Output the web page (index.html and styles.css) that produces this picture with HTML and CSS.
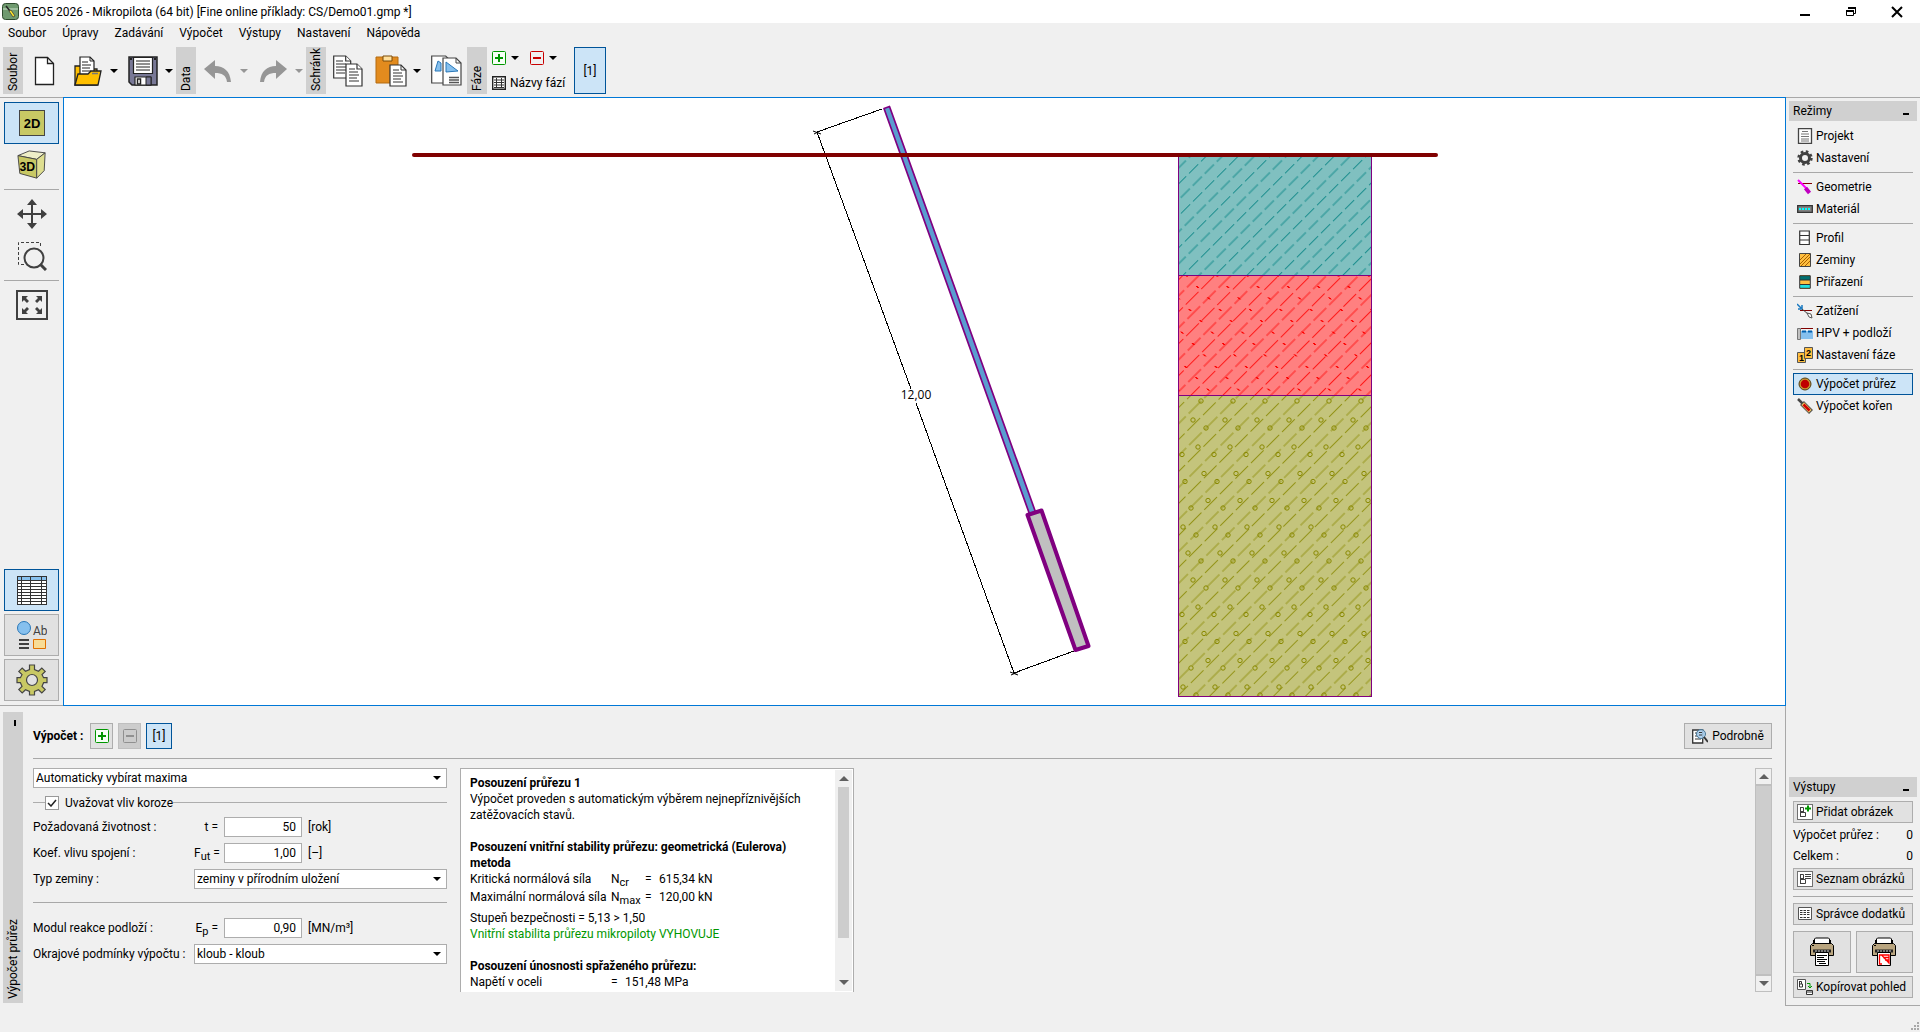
FILE: index.html
```html
<!DOCTYPE html>
<html lang="cs">
<head>
  <meta charset="UTF-8">
  <title>GEO5 2026 - Mikropilota</title>
  <link rel="stylesheet" href="styles.css">
</head>
<body>
  <!-- shared icons -->
  <svg class="sprite" aria-hidden="true">
    <symbol id="i-plus" viewBox="0 0 14 14"><rect x=".5" y=".5" width="13" height="13" rx="1" fill="#f6fff6" stroke="#009600"/><path d="M7 3v8M3 7h8" stroke="#009600" stroke-width="2"/></symbol>
    <symbol id="i-minus" viewBox="0 0 14 14"><rect x=".5" y=".5" width="13" height="13" rx="1" fill="none" stroke="currentColor"/><path d="M3 7h8" stroke="currentColor" stroke-width="2"/></symbol>
    <symbol id="i-down" viewBox="0 0 8 4"><path d="M0 0h8L4 4z" fill="currentColor"/></symbol>
    <symbol id="i-up" viewBox="0 0 10 5"><path d="M0 5h10L5 0z" fill="#606060"/></symbol>
    <symbol id="i-printer" viewBox="0 0 24 30">
      <path d="M4.500 8V2l1-1h13l1 1v6" fill="#fff" stroke="#000"/>
      <path d="M.500 8.500l2-2h19l2 2v10H.500z" fill="#b9a57f" stroke="#000"/>
      <path d="M3 3h1.500v4H3zM19.500 3H21v4h-1.500z" fill="#000"/>
      <path d="M3 12.500h18v3H3z" fill="#222"/><path d="M5 14h14" stroke="#ccc" stroke-dasharray="2 1"/>
      <path d="M2 8.500h2" stroke="#000"/>
      <path d="M5.500 15.500h13v13h-13z" fill="#fff" stroke="#000"/>
    </symbol>
    <symbol id="i-picture" viewBox="0 0 16 16"><rect x=".5" y=".5" width="15" height="15" fill="#fff" stroke="#707070"/><path d="M3.500 3v10M3.500 3.500h3v4h-3M3.500 8.500h5v4h-5M6.500 6.500v2" fill="none" stroke="#404040"/></symbol>
  </svg>

  <header class="titlebar">
    <svg width="17" height="17" viewBox="0 0 17 17"><rect x=".5" y=".5" width="16" height="16" rx="3" fill="#6f9a6f" stroke="#2d4a2d"/><path d="M1 6h15" stroke="#cfe3cf"/><path d="M4 3l4 5" stroke="#222" stroke-width="1.500"/><path d="M7 8l4 6 2-1-4-6z" fill="#ffe92e" stroke="#333" stroke-width=".7"/></svg>
    <span class="title">GEO5 2026 - Mikropilota (64 bit) [Fine online příklady: CS/Demo01.gmp *]</span>
    <button class="win-btn" aria-label="Minimalizovat"><svg width="12" height="12"><path d="M1 9h10" stroke="#000" stroke-width="2"/></svg></button>
    <button class="win-btn" aria-label="Obnovit"><svg width="12" height="12"><path d="M3.500 3V1.500h7v6H9" fill="none" stroke="#000"/><path d="M3 1h8v2H3zM1 4h8v2H1z"/><path d="M1.500 4.500h7v5h-7z" fill="none" stroke="#000"/></svg></button>
    <button class="win-btn" aria-label="Zavřít"><svg width="12" height="12"><path d="M1 1l10 10M11 1L1 11" stroke="#000" stroke-width="2"/></svg></button>
  </header>

  <nav class="menu">
    <a href="#">Soubor</a>
    <a href="#">Úpravy</a>
    <a href="#">Zadávání</a>
    <a href="#">Výpočet</a>
    <a href="#">Výstupy</a>
    <a href="#">Nastavení</a>
    <a href="#">Nápověda</a>
  </nav>

  <div class="toolbar">
    <div class="group">
      <span class="tab">Soubor</span>
      <button class="tool" aria-label="Nový"><svg width="30" height="30" viewBox="0 0 30 30"><path d="M5.500 1.500h12l6 6v21h-18z" fill="#fff" stroke="#222" stroke-width="1.300"/><path d="M17.500 1.500v6h6" fill="none" stroke="#222" stroke-width="1.300"/></svg></button>
      <div class="split">
        <button class="tool" aria-label="Otevřít"><svg width="30" height="30" viewBox="0 0 30 30"><path d="M2 29V10h5l2 3h15v16z" fill="#ffbf00" stroke="#222" stroke-width="1.300"/><path d="M7 20V1h10l4 4v15z" fill="#fff" stroke="#222" stroke-width="1.200"/><path d="M17 1v4h4M9 6h6M9 9h9M9 12h8M9 15h9" fill="none" stroke="#222"/><path d="M2 29l3-11h10l3-3h10l-3 14z" fill="#ffbf00" stroke="#222" stroke-width="1.300"/><path d="M19 17.500h6" stroke="#777" stroke-width="1.500"/></svg></button>
        <button class="arrow" aria-label="Otevřít další"><svg width="8" height="4"><use href="#i-down"/></svg></button>
      </div>
      <div class="split">
        <button class="tool" aria-label="Uložit"><svg width="30" height="30" viewBox="0 0 30 30"><path d="M1 1h28v28H4l-3-3z" fill="#787896" stroke="#222" stroke-width="1.500"/><path d="M5.500 1.500h19v16h-19z" fill="#fff" stroke="#222" stroke-width="1.200"/><path d="M8 5h14M8 8h14M8 11h14M8 14h14" stroke="#222"/><path d="M7 21h16v8H7z" fill="#fff" stroke="#222" stroke-width="1.200"/><path d="M18 21h5v8h-5z" fill="#787896" stroke="#222"/><path d="M9.500 23h3v5h-3z" fill="#fff" stroke="#222" stroke-width="1.500"/><path d="M2 3h2M26 3h2" stroke="#222" stroke-width="2"/></svg></button>
        <button class="arrow" aria-label="Uložit další"><svg width="8" height="4"><use href="#i-down"/></svg></button>
      </div>
    </div>

    <div class="group">
      <span class="tab">Data</span>
      <div class="split off">
        <button class="tool" aria-label="Zpět"><svg width="28" height="24" viewBox="0 0 28 24"><path d="M0 10L11 1v6c9 0 15 5 16 16h-4c-1-7-5-9-12-9v6z" fill="#969696"/></svg></button>
        <button class="arrow" aria-label="Historie zpět"><svg width="8" height="4"><use href="#i-down"/></svg></button>
      </div>
      <div class="split off">
        <button class="tool" aria-label="Znovu"><svg width="28" height="24" viewBox="0 0 28 24"><path d="M28 10L17 1v6C8 7 2 12 1 23h4c1-7 5-9 12-9v6z" fill="#969696"/></svg></button>
        <button class="arrow" aria-label="Historie znovu"><svg width="8" height="4"><use href="#i-down"/></svg></button>
      </div>
    </div>

    <div class="group">
      <span class="tab">Schránk</span>
      <button class="tool" aria-label="Kopírovat"><svg width="30" height="32" viewBox="0 0 30 32"><g fill="#fff" stroke="#333" stroke-width="1.200"><path d="M.7 1h12l5 5v17H.7z"/><path d="M12.700 1v5h5M3 6h7M3 9h10M3 12h10M3 15h10M3 18h9"/><path d="M13 9h11l5 5v17H13z"/><path d="M24 9v5h5M16 14h6M16 17h9M16 20h10M16 23h8M16 26h10"/></g></svg></button>
      <div class="split">
        <button class="tool" aria-label="Vložit"><svg width="32" height="32" viewBox="0 0 32 32"><path d="M1 2h22v26H1z" fill="#e28b1e" stroke="#b36a10"/><path d="M8 1h9v5H8z" fill="#ffdf9b" stroke="#7a4a08"/><path d="M15 10h11l5 5v16H15z" fill="#fff" stroke="#333" stroke-width="1.200"/><path d="M26 10v5h5M18 15h6M18 18h9M18 21h10M18 24h8M18 27h10" fill="none" stroke="#333"/></svg></button>
        <button class="arrow" aria-label="Vložit další"><svg width="8" height="4"><use href="#i-down"/></svg></button>
      </div>
      <button class="tool" aria-label="Kopírovat pohled"><svg width="31" height="31" viewBox="0 0 31 31"><path d="M.7 1h14l5 5v22H.7z" fill="#fff" stroke="#444" stroke-width="1.200"/><path d="M4 16l3-10 3 2v8z" fill="#86c0ee" stroke="#2a78b8"/><path d="M12 3h13l5 5v22H12z" fill="#fff" stroke="#444" stroke-width="1.200"/><path d="M25 3v5h5" fill="none" stroke="#444"/><path d="M15 17V7l12 9z" fill="#86c0ee" stroke="#2a78b8"/><path d="M18 22.500h10M18 25h10M18 27.500h10" stroke="#555" stroke-width="1.300"/></svg></button>
    </div>

    <div class="group">
      <span class="tab">Fáze</span>
      <div class="phases">
        <div class="phase-row">
          <button class="flat" aria-label="Přidat fázi"><svg width="14" height="14"><use href="#i-plus"/></svg></button>
          <button class="arrow" aria-label="Přidat fázi další"><svg width="8" height="4"><use href="#i-down"/></svg></button>
          <button class="flat red" aria-label="Odebrat fázi"><svg width="14" height="14"><use href="#i-minus"/></svg></button>
          <button class="arrow" aria-label="Odebrat fázi další"><svg width="8" height="4"><use href="#i-down"/></svg></button>
        </div>
        <button class="flat names"><svg width="14" height="14" viewBox="0 0 14 14"><path d="M.7.7h12.600v12.600H.7z" fill="#fff" stroke="#222" stroke-width="1.400"/><path d="M2 4h10M2 6.500h10M2 9h10M2 11.500h10M4.500 2v10M9.500 2v10" stroke="#333"/></svg>Názvy fází</button>
      </div>
      <button class="active phase-btn">[1]</button>
    </div>
  </div>

  <main class="workspace">
    <div class="viewbar">
      <button class="view active" aria-label="2D"><svg width="26" height="26" viewBox="0 0 26 26"><rect x=".5" y=".5" width="25" height="25" fill="#c8c864" stroke="#444"/><text class="icon-text" x="13" y="18" text-anchor="middle">2D</text></svg></button>
      <button class="view" aria-label="3D"><svg width="30" height="30" viewBox="0 0 32 32"><path d="M1 6L13 1l17 2-9 7z" fill="#eeeec8" stroke="#444"/><path d="M1 6l20 4v20L3 25z" fill="#c8c864" stroke="#444"/><path d="M21 10l9-7-1 19-8 8z" fill="#dede90" stroke="#444"/><text class="icon-text" x="11" y="22" text-anchor="middle">3D</text></svg></button>
      <hr>
      <button class="view" aria-label="Posun"><svg width="30" height="30" viewBox="0 0 30 30"><path d="M15 4v22M4 15h22" stroke="#404040" stroke-width="2"/><path d="M15 0l5 6H10zM15 30l5-6H10zM0 15l6-5v10zM30 15l-6-5v10z" fill="#404040"/></svg></button>
      <button class="view" aria-label="Zvětšit výřez"><svg width="30" height="30" viewBox="0 0 30 30"><path d="M7 23.500H1.500v-22h22V7" fill="none" stroke="#404040" stroke-dasharray="3 2"/><circle cx="17" cy="17" r="9.500" fill="none" stroke="#404040" stroke-width="2"/><path d="M23 23l6 6" stroke="#404040" stroke-width="3"/></svg></button>
      <hr>
      <button class="view" aria-label="Zobrazit vše"><svg width="32" height="30" viewBox="0 0 32 30"><rect x="1" y="1" width="30" height="28" fill="none" stroke="#404040" stroke-width="2"/><path d="M6 6h6l-2 2 3 3-2 2-3-3-2 2zM26 6h-6l2 2-3 3 2 2 3-3 2 2zM6 24h6l-2-2 3-3-2-2-3 3-2-2zM26 24h-6l2-2-3-3 2-2 3 3 2-2z" fill="#404040"/></svg></button>
      <div class="view-bottom">
        <button class="view active" aria-label="Tabulka"><svg width="30" height="29" viewBox="0 0 30 29"><rect x=".5" y=".5" width="29" height="28" fill="#fff" stroke="#333"/><path d="M1 1h28v3H1z" fill="#86c0ee"/><path d="M1 4.500h28M1 7.500h28M1 10.500h28M1 13.500h28M1 16.500h28M1 19.500h28M1 22.500h28M1 25.500h28M4.500 1v27M13.500 1v27M24.500 1v27" stroke="#333"/></svg></button>
        <button class="view raised" aria-label="Nastavení kreslení"><svg width="30" height="28" viewBox="0 0 30 28"><circle cx="7" cy="7" r="6.500" fill="#86c0ee" stroke="#2a78b8"/><text class="ab-text" x="16" y="14">Ab</text><path d="M2 19h10M2 23h10M2 27h10" stroke="#404040" stroke-width="2"/><path d="M16.500 18.500h12v9h-12z" fill="#f8dc96" stroke="#e07000"/></svg></button>
        <button class="view raised" aria-label="Nastavení"><svg width="32" height="32" viewBox="-16 -16 32 32"><g fill="#c8c864" stroke="#444" stroke-width="1.200"><path d="M-2.500-10.500V-15h5v4.500l4 1.700 3.300-3.200 3.400 3.400-3.200 3.300 1.600 3H15v5h-3.400l-1.600 3.600 3.200 3.300-3.400 3.400-3.300-3.200-4 1.600V15h-5v-3.600l-4-1.600-3.300 3.200-3.400-3.400 3.200-3.300-1.600-3.600H-15v-5h3.400l1.600-3-3.200-3.300 3.400-3.400 3.300 3.200z"/><circle r="5.500" fill="#e1e1e1"/></g></svg></button>
      </div>
    </div>

    <section class="canvas">
      <svg class="drawing" viewBox="64 98 1721 607" preserveAspectRatio="xMidYMid meet">
        <defs>
          <pattern id="hatch-teal" width="17" height="22.600" patternUnits="userSpaceOnUse" patternTransform="translate(0 2.700) rotate(-45)"><path d="M0 1h13M6 12.300h11M0 12.300h2" stroke="#008080" stroke-width=".8"/></pattern>
          <pattern id="hatch-red" width="22" height="22.600" patternUnits="userSpaceOnUse" patternTransform="translate(0 2.700) rotate(-45)"><path d="M0 1h18M9 12.300h13M0 12.300h5" stroke="#f00" stroke-width=".8"/></pattern>
          <pattern id="hatch-olive" width="22" height="22.600" patternUnits="userSpaceOnUse" patternTransform="translate(0 2.700) rotate(-45)"><path d="M0 1h18M9 12.300h13M0 12.300h5" stroke="#888800" stroke-width=".8"/></pattern>
          <pattern id="dots-red" width="30.300" height="11.400" patternUnits="userSpaceOnUse" patternTransform="translate(1195.500 286) skewX(44.700)"><path d="M0 0h2v2H0z" fill="#f00"/></pattern>
          <pattern id="rings-olive" x="1179" y="396" width="32" height="160" patternUnits="userSpaceOnUse">
            <g fill="none" stroke="#888800">
              <circle cx="22" cy="5" r="2.200"/><circle cx="14" cy="24" r="2.200"/>
              <circle cx="27" cy="32" r="2.200"/><circle cx="19" cy="51" r="2.200"/>
              <circle cx="3" cy="58.500" r="2.200"/><circle cx="25" cy="77.500" r="2.200"/>
              <circle cx="6" cy="85.500" r="2.200"/><circle cx="29" cy="104.500" r="2.200"/>
              <circle cx="12" cy="112" r="2.200"/><circle cx="4" cy="131" r="2.200"/>
              <circle cx="17" cy="139" r="2.200"/><circle cx="9" cy="157" r="2.200"/>
            </g>
          </pattern>
        </defs>

        <!-- soil profile -->
        <g>
          <rect x="1178" y="155" width="193" height="120" fill="#80c0c0"/>
          <rect x="1178" y="155" width="193" height="120" fill="url(#hatch-teal)"/>
          <rect x="1178" y="275" width="193" height="120" fill="#ff8080"/>
          <rect x="1178" y="275" width="193" height="120" fill="url(#hatch-red)"/>
          <rect x="1178" y="275" width="193" height="120" fill="url(#dots-red)"/>
          <rect x="1178" y="395" width="193" height="301" fill="#c4c47c"/>
          <rect x="1178" y="395" width="193" height="301" fill="url(#hatch-olive)"/>
          <rect x="1178" y="395" width="193" height="301" fill="url(#rings-olive)"/>
          <path d="M1178.500 155v541.500h193V155M1178.500 275.500h193M1178.500 395.500h193" fill="none" stroke="#800080" shape-rendering="crispEdges"/>
        </g>

        <!-- dimension -->
        <path d="M882 109L817 132L911 389M916 403L1014 673L1074 651" fill="none" stroke="#000" shape-rendering="crispEdges"/>
        <path d="M813 131l8 3M814 134l6-3M1010 672l8 3M1011 675l7-3" stroke="#000"/>
        <text class="dim-text" x="916" y="399" text-anchor="middle">12,00</text>

        <!-- micropile: tube and root -->
        <g stroke-linejoin="round">
          <path d="M884 108.500l5.500-2L1035.500 512l-6 2z" fill="#5b9dd0" stroke="#800080" stroke-width="1.700"/>
          <path d="M1027.500 515l14-4.500L1088.500 646l-13 4z" fill="#c0c0c0" stroke="#800080" stroke-width="4"/>
        </g>
        <path d="M414 155h1022" stroke="#800000" stroke-width="4" stroke-linecap="round"/>
      </svg>
    </section>

    <section class="panel">
      <div class="panel-tab"><span>Výpočet průřez</span><i></i></div>
      <div class="panel-body">
        <div class="panel-head">
          <strong>Výpočet :</strong>
          <button class="small raised" aria-label="Přidat výpočet"><svg width="14" height="14"><use href="#i-plus"/></svg></button>
          <button class="small raised" aria-label="Odebrat výpočet" disabled><svg width="14" height="14"><use href="#i-minus"/></svg></button>
          <button class="small active calc-btn">[1]</button>
          <button class="raised details"><svg width="16" height="16" viewBox="0 0 16 16"><path d="M.7 2h10v13H.7z" fill="#fff" stroke="#333" stroke-width="1.300"/><path d="M3 5h4M3 8h4M3 11h6" stroke="#333"/><circle cx="9" cy="6" r="4.500" fill="#a8cff0" fill-opacity=".85" stroke="#4a7896"/><path d="M7 4.500h3M7 7h3" stroke="#333"/><path d="M12 9l4 5" stroke="#333" stroke-width="2"/></svg>Podrobně</button>
        </div>

        <div class="panel-content">
          <form class="form">
            <select aria-label="Výběr zatížení"><option>Automaticky vybírat maxima</option></select>
            <label class="corrosion"><input type="checkbox" checked>Uvažovat vliv koroze</label>
            <div class="field">
              <label for="life">Požadovaná životnost :</label>
              <span class="sym">t =</span><input id="life" type="text" value="50"><span>[rok]</span>
            </div>
            <div class="field">
              <label for="fut">Koef. vlivu spojení :</label>
              <span class="sym">F<sub>ut</sub> =</span><input id="fut" type="text" value="1,00"><span>[–]</span>
            </div>
            <div class="field">
              <label for="soil">Typ zeminy :</label>
              <select id="soil"><option>zeminy v přírodním uložení</option></select>
            </div>
            <hr>
            <div class="field">
              <label for="ep">Modul reakce podloží :</label>
              <span class="sym">E<sub>p</sub> =</span><input id="ep" type="text" value="0,90"><span>[MN/m³]</span>
            </div>
            <div class="field">
              <label for="bc">Okrajové podmínky výpočtu :</label>
              <select id="bc"><option>kloub - kloub</option></select>
            </div>
          </form>

          <div class="report">
            <div class="report-text">
              <h3>Posouzení průřezu 1</h3>
              <p>Výpočet proveden s automatickým výběrem nejnepříznivějších zatěžovacích stavů.</p>
              <h3>Posouzení vnitřní stability průřezu: geometrická (Eulerova) metoda</h3>
              <table>
                <tr><td class="name">Kritická normálová síla</td><td class="var">N<sub>cr</sub></td><td class="eq">=</td><td class="val">615,34</td><td>kN</td></tr>
                <tr><td class="name">Maximální normálová síla</td><td class="var">N<sub>max</sub></td><td class="eq">=</td><td class="val">120,00</td><td>kN</td></tr>
              </table>
              <p>Stupeň bezpečnosti = 5,13 &gt; 1,50</p>
              <p class="ok">Vnitřní stabilita průřezu mikropiloty VYHOVUJE</p>
              <h3>Posouzení únosnosti spřaženého průřezu:</h3>
              <table>
                <tr><td class="name">Napětí v oceli</td><td class="eq">=</td><td class="val">151,48</td><td>MPa</td></tr>
              </table>
            </div>
            <div class="scroll inner">
              <button aria-label="Nahoru"><svg width="10" height="5"><use href="#i-up"/></svg></button>
              <div class="thumb"></div>
              <button class="down" aria-label="Dolů"><svg width="10" height="5"><use href="#i-up"/></svg></button>
            </div>
          </div>

          <div class="scroll outer">
            <button aria-label="Nahoru"><svg width="10" height="5"><use href="#i-up"/></svg></button>
            <div class="thumb"></div>
            <button class="down" aria-label="Dolů"><svg width="10" height="5"><use href="#i-up"/></svg></button>
          </div>
        </div>
      </div>
    </section>

    <aside class="side">
      <div class="side-head">Režimy<i></i></div>
      <nav class="modes">
        <a href="#"><svg width="16" height="16" viewBox="0 0 16 16"><path d="M1.500.7h13v14.600h-13z" fill="#fff" stroke="#444" stroke-width="1.300"/><path d="M5 3.500h6M4 6h8M4 8.500h8M4 11h8M4 13h8" stroke="#777"/></svg>Projekt</a>
        <a href="#"><svg width="16" height="16" viewBox="-8 -8 16 16"><circle r="4.500" fill="none" stroke="#404040" stroke-width="3"/><circle r="6.500" fill="none" stroke="#404040" stroke-width="2.400" stroke-dasharray="2.600 2.505"/></svg>Nastavení</a>
        <hr>
        <a href="#"><svg width="16" height="16" viewBox="0 0 16 16"><path d="M1 4.500h14" stroke="#800000"/><path d="M1 1l9 9" stroke="#f0f" stroke-width="2"/><path d="M8.500 9l4 5" stroke="#c000c0" stroke-width="4"/></svg>Geometrie</a>
        <a href="#"><svg width="16" height="16" viewBox="0 0 16 16"><path d="M.7 4.700h14.600v6.600H.7z" fill="#808080" stroke="#333" stroke-width="1.300"/><path d="M2 8h12" stroke="#0ff" stroke-width="2" stroke-dasharray="2 1"/></svg>Materiál</a>
        <hr>
        <a href="#"><svg width="16" height="16" viewBox="0 0 16 16"><path d="M2.700 1h9.600v13.500H2.700zM2.700 5.500h9.600M2.700 10h9.600" fill="#fff" stroke="#333" stroke-width="1.200"/></svg>Profil</a>
        <a href="#"><svg width="16" height="16" viewBox="0 0 16 16"><path d="M2.500 1.500h11v13h-11z" fill="#ffbf40" stroke="#444"/><path d="M3 8l6-6M3 12l10-10M4 14l9-9M8 14l5-5" stroke="#a86000"/></svg>Zeminy</a>
        <a href="#"><svg width="16" height="16" viewBox="0 0 16 16"><path d="M3 1h10v14H3z" fill="#ffbf40"/><path d="M3 2h10v4H3z" fill="#007070"/><path d="M3 11h10v3H3z" fill="#20e0e0"/><path d="M2.700 1.700h10.600v12.600H2.700zM3 6h10M3 10.500h10" fill="none" stroke="#333"/></svg>Přiřazení</a>
        <hr>
        <a href="#"><svg width="16" height="16" viewBox="0 0 16 16"><path d="M3 7.500h12" stroke="#800000"/><path d="M0 1l4 4M5 2v4H1" fill="none" stroke="#1878c0" stroke-width="1.500"/><path d="M5 6l6 5" stroke="#444"/><path d="M10 10l2 4 3 1-1-4z" fill="#fff" stroke="#555"/></svg>Zatížení</a>
        <a href="#"><svg width="16" height="16" viewBox="0 0 16 16"><path d="M4 6h12v8H4z" fill="#86c0ee"/><path d="M4 3.500h12" stroke="#800000"/><path d="M5 6.500h11" stroke="#0060b0" stroke-width="2" stroke-dasharray="4 2"/><path d="M.5 3.500h3v11h-3z" fill="#c0c0c0" stroke="#777"/></svg>HPV + podloží</a>
        <a href="#"><svg width="16" height="16" viewBox="0 0 16 16"><path d="M.5 5.500h8v10h-8z" fill="#ffbf40" stroke="#555"/><path d="M7.500.5h8v11h-8z" fill="#ffbf40" stroke="#555"/><text class="tiny-text" x="2" y="14">1</text><text class="tiny-text" x="9" y="9">2</text></svg>Nastavení fáze</a>
        <hr>
        <a href="#" class="current"><svg width="16" height="16" viewBox="0 0 16 16"><circle cx="8" cy="8" r="5.500" fill="#c00000"/><circle cx="8" cy="8" r="5" fill="none" stroke="#c89a30" stroke-width="1.500"/><circle cx="8" cy="8" r="6" fill="none" stroke="#554010"/></svg>Výpočet průřez</a>
        <a href="#"><svg width="16" height="16" viewBox="0 0 16 16"><path d="M1 1l6 6" stroke="#444" stroke-width="2.500"/><path d="M5 5l9 9" stroke="#444" stroke-width="5.500"/><path d="M5.700 5.700l7.600 7.600" stroke="#e8c060" stroke-width="4"/><path d="M6.500 6.500l6 6" stroke="#d00000" stroke-width="2.500"/></svg>Výpočet kořen</a>
      </nav>

      <div class="outputs">
        <div class="side-head">Výstupy<i></i></div>
        <div class="outputs-body">
          <button class="raised wide"><svg width="16" height="16" viewBox="0 0 16 16"><use href="#i-picture"/><path d="M11 1.500v6M8 4.500h6" stroke="#009600" stroke-width="2"/></svg>Přidat obrázek</button>
          <div class="count"><span>Výpočet průřez :</span><span>0</span></div>
          <div class="count"><span>Celkem :</span><span>0</span></div>
          <button class="raised wide"><svg width="16" height="16" viewBox="0 0 16 16"><use href="#i-picture"/><path d="M8 3.500h6M8 5.500h6M8 7.500h6" stroke="#404040"/></svg>Seznam obrázků</button>
          <hr>
          <button class="raised wide"><svg width="16" height="16" viewBox="0 0 16 16"><path d="M1.500 1.500h13v12h-13z" fill="#fff" stroke="#555"/><path d="M3 4.500h10M3 6.500h10M3 8.500h10M3 11.500h10" stroke="#333" stroke-dasharray="2.500 1"/></svg>Správce dodatků</button>
          <div class="printers">
            <button class="raised" aria-label="Tisk protokolu"><svg width="24" height="30" viewBox="0 0 24 30"><use href="#i-printer"/><path d="M7 18.500h10M7 20.500h7M7 22.500h10M7 24.500h8M9 26.500h7" stroke="#000"/></svg></button>
            <button class="raised" aria-label="Tisk pohledu"><svg width="24" height="30" viewBox="0 0 24 30"><use href="#i-printer"/><path d="M9 18H7.500v9H10M9.500 18h7.500v8zM11 20.500h6M13 23h4" fill="none" stroke="#f00" stroke-width="1.300"/></svg></button>
          </div>
          <button class="raised wide"><svg width="16" height="16" viewBox="0 0 16 16"><path d="M.5.500h8v10h-8z" fill="#fff" stroke="#555"/><path d="M2.500 2v6h3V5h-3M2.500 2.500h2V5" fill="none" stroke="#333"/><path d="M10 4.500h3v4M11 7l2 2 2-2" fill="none" stroke="#009600"/><path d="M9.500 11.500h6v4h-6zM9.500 13h6" fill="#fff" stroke="#333"/></svg>Kopírovat pohled</button>
        </div>
      </div>
    </aside>
  </main>

  <footer class="status"><svg width="9" height="9" viewBox="0 0 9 9"><path d="M7 0h2v2H7zM4 3h2v2H4zM7 3h2v2H7zM1 6h2v2H1zM4 6h2v2H4zM7 6h2v2H7z" fill="#a8a8a8"/></svg></footer>
</body>
</html>
```
FILE: styles.css
```css
* {
  box-sizing: border-box;
  margin: 0;
  padding: 0;
}

body {
  display: flex;
  flex-direction: column;
  height: 100vh;
  overflow: hidden;
  background: #f0f0f0;
  color: #000;
  font-family: Roboto, "Open Sans", sans-serif;
  font-size: 12px;
  line-height: 16px;
}

button, input, select {
  font: inherit;
  color: inherit;
  border-radius: 0;
}

button {
  display: flex;
  align-items: center;
  justify-content: center;
  background: none;
  border: none;
}

a {
  color: inherit;
  text-decoration: none;
}

svg {
  display: block;
  flex: none;
}

hr {
  border: none;
  border-top: 1px solid #a8a8a8;
}

sub {
  font-size: 11px;
  line-height: 0;
  vertical-align: -3px;
}

.sprite {
  display: none;
}

.raised {
  background: #e1e1e1;
  border: 1px solid #adadad;
}

.active {
  background: #cce4f7;
  border: 1px solid #005499;
}

/* title and menu */
.titlebar {
  display: flex;
  align-items: center;
  height: 23px;
  padding: 0 0 0 2px;
  background: #fff;
}

.title {
  flex: 1;
  margin-left: 4px;
}

.win-btn {
  width: 46px;
  height: 23px;
}

.menu {
  display: flex;
  gap: 16px;
  height: 20px;
  padding: 2px 8px;
}

/* toolbar */
.toolbar {
  display: flex;
  gap: 1px;
  height: 54px;
  padding: 4px 3px 3px;
}

.group {
  display: flex;
  gap: 3px;
}

.tab {
  width: 20px;
  margin-right: -1px;
  padding-top: 3px;
  background: #d0d0d0;
  line-height: 20px;
  white-space: nowrap;
  writing-mode: vertical-rl;
  transform: rotate(180deg);
}

.tool {
  width: 40px;
}

.split {
  display: flex;
}

.split.off {
  color: #969696;
}

.arrow {
  width: 12px;
}

.phases {
  display: flex;
  flex-direction: column;
  justify-content: space-between;
  width: 82px;
  padding: 4px 0 3px 3px;
}

.phase-row {
  display: flex;
  gap: 3px;
}

.phase-row .arrow {
  margin-right: 6px;
}

.red {
  color: #c80000;
}

.names {
  justify-content: flex-start;
  gap: 4px;
  white-space: nowrap;
}

.phase-btn {
  width: 32px;
}

/* main area */
.workspace {
  flex: 1;
  display: grid;
  grid-template-columns: 63px 1fr 134px;
  grid-template-rows: 1fr 300px;
  min-height: 0;
}

.viewbar {
  display: flex;
  flex-direction: column;
  padding: 4px;
  border-top: 1px solid #a8a8a8;
  border-bottom: 1px solid #a8a8a8;
}

.viewbar hr {
  margin: 3px 0;
}

.view {
  width: 55px;
  height: 42px;
}

.view-bottom {
  display: flex;
  flex-direction: column;
  gap: 3px;
  margin-top: auto;
}

.icon-text {
  font: bold 13px "Liberation Sans", sans-serif;
}

.ab-text {
  font-size: 12px;
  fill: #404040;
}

.tiny-text {
  font: bold 9px "Liberation Sans", sans-serif;
}

.canvas {
  min-width: 0;
  min-height: 0;
  background: #fff;
  border: 1px solid #0078d7;
}

.drawing {
  width: 100%;
  height: 100%;
}

.dim-text {
  font-family: "Open Sans", sans-serif;
  font-size: 12px;
}

/* calculation panel */
.panel {
  grid-column: 1 / 3;
  grid-row: 2;
  display: flex;
  gap: 10px;
  padding: 6px 13px 3px 3px;
  border-right: 1px solid #a8a8a8;
}

.panel-tab {
  display: flex;
  justify-content: space-between;
  width: 20px;
  padding: 4px 0 8px;
  background: #d0d0d0;
  line-height: 20px;
  writing-mode: vertical-rl;
  transform: rotate(180deg);
}

.panel-tab i {
  align-self: center;
  width: 2px;
  height: 6px;
  margin-right: 4px;
  background: #000;
}

.panel-body {
  flex: 1;
  display: flex;
  flex-direction: column;
  padding: 11px 0;
}

.panel-head {
  display: flex;
  align-items: center;
  gap: 5px;
  height: 36px;
  padding-bottom: 9px;
  border-bottom: 1px solid #a8a8a8;
}

.panel-head strong {
  width: 52px;
  white-space: nowrap;
}

.small {
  width: 23px;
  height: 26px;
}

.small:disabled {
  background: #ccc;
  border-color: #bfbfbf;
  color: #909090;
}

.calc-btn {
  width: 26px;
}

.details {
  gap: 4px;
  width: 88px;
  height: 26px;
  margin-left: auto;
}

.panel-content {
  flex: 1;
  display: flex;
  gap: 13px;
  min-height: 0;
  margin-top: 9px;
}

.form {
  display: flex;
  flex-direction: column;
  gap: 6px;
  width: 414px;
}

.form select {
  flex: 1 0 20px;
  height: 20px;
  padding: 0 2px;
  appearance: none;
  background: #fff url("data:image/svg+xml,%3Csvg xmlns='http://www.w3.org/2000/svg' width='8' height='4'%3E%3Cpath d='M0 0h8L4 4z'/%3E%3C/svg%3E") no-repeat right 5px center;
  border: 1px solid #adadad;
}

.form > select {
  flex: none;
}

.form hr {
  margin: 7px 0 9px;
}

.corrosion {
  display: flex;
  align-items: center;
  height: 17px;
}

.corrosion::before,
.corrosion::after {
  content: "";
  flex: 1;
  border-top: 1px solid #adadad;
}

.corrosion::before {
  flex: 0 0 12px;
}

.corrosion input {
  width: 14px;
  height: 14px;
  margin-right: 6px;
  appearance: none;
  background: #fff url("data:image/svg+xml,%3Csvg xmlns='http://www.w3.org/2000/svg' width='10' height='8'%3E%3Cpath d='M1 4l3 3 5-6' fill='none' stroke='%23222' stroke-width='1.5'/%3E%3C/svg%3E") no-repeat center;
  border: 1px solid #999;
}

.field {
  display: flex;
  align-items: center;
  gap: 6px;
  height: 20px;
}

.field label {
  width: 161px;
  margin-right: -6px;
  white-space: nowrap;
}

.field .sym {
  width: 24px;
  text-align: right;
  white-space: nowrap;
}

.field input {
  width: 78px;
  height: 20px;
  padding: 0 5px;
  background: #fff;
  border: 1px solid #adadad;
  text-align: right;
}

.report {
  display: flex;
  width: 394px;
  background: #fff;
  border: 1px solid #adadad;
  border-bottom: none;
  overflow: hidden;
}

.report-text {
  flex: 1;
  padding: 6px 20px 0 9px;
}

.report h3 {
  font-size: 12px;
  line-height: 16px;
}

.report p + h3 {
  margin-top: 16px;
}

.report table {
  border-collapse: collapse;
}

.report td {
  height: 18px;
  line-height: 16px;
  vertical-align: top;
  white-space: nowrap;
}

.report table + p {
  margin-top: 3px;
}

.report .name {
  width: 141px;
}

.report .var {
  width: 34px;
}

.report .eq {
  width: 14px;
}

.report .val {
  width: 39px;
}

.ok {
  color: #009600;
}

.scroll {
  display: flex;
  flex-direction: column;
  width: 17px;
  background: #f0f0f0;
}

.scroll button {
  height: 17px;
}

.down svg {
  transform: rotate(180deg);
}

.scroll .thumb {
  flex: 1;
  background: #cdcdcd;
}

.inner {
  margin: 1px;
}

.inner .thumb {
  flex: 0 0 151px;
  margin: 0 3px;
}

.inner .down {
  margin-top: auto;
}

.outer {
  margin-left: auto;
}

.outer button,
.outer .thumb {
  border: 1px solid #bfbfbf;
}

/* right side */
.side {
  grid-column: 3;
  grid-row: 1 / 3;
  display: flex;
  flex-direction: column;
  padding: 3px 3px 7px;
  border-top: 1px solid #a8a8a8;
  border-bottom: 1px solid #a8a8a8;
}

.side-head {
  display: flex;
  align-items: center;
  justify-content: space-between;
  height: 20px;
  padding: 0 8px 0 4px;
  background: #d0d0d0;
}

.side-head i {
  width: 6px;
  height: 2px;
  margin-top: 6px;
  background: #000;
}

.modes {
  padding: 4px 4px 0;
}

.modes a {
  display: flex;
  align-items: center;
  gap: 3px;
  height: 22px;
  padding: 0 3px;
  border: 1px solid transparent;
  white-space: nowrap;
}

.modes a.current {
  background: #cce4f7;
  border-color: #005499;
}

.modes hr {
  margin: 3px 0;
}

.outputs {
  margin-top: auto;
}

.outputs-body {
  padding: 4px 4px 0;
}

.wide {
  justify-content: flex-start;
  gap: 3px;
  width: 100%;
  height: 22px;
  padding: 0 3px;
  white-space: nowrap;
}

.count {
  display: flex;
  justify-content: space-between;
  height: 21px;
  padding-top: 4px;
}

.count + .wide {
  margin-top: 3px;
}

.outputs hr {
  margin: 6px 0;
}

.printers {
  display: flex;
  gap: 5px;
  margin: 6px 0 3px;
}

.printers button {
  flex: 1;
  height: 42px;
}

.status {
  display: flex;
  align-items: flex-end;
  justify-content: flex-end;
  height: 26px;
  padding: 1px;
}
```
